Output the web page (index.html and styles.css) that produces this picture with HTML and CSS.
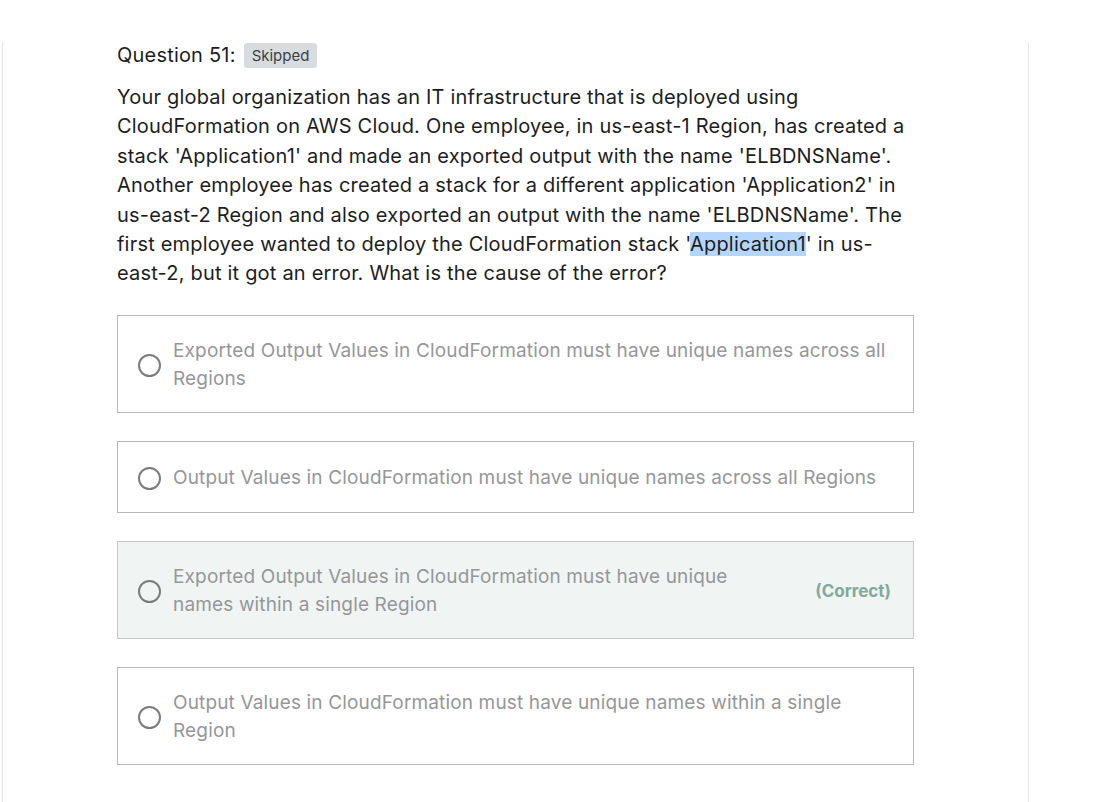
FILE: index.html
```html
<!DOCTYPE html>
<html>
<head>
<meta charset="utf-8">
<link rel="stylesheet" href="styles.css">
</head>
<body>
<div class="frame">
  <div class="content">
    <div class="title-row">
      <span class="title">Question 51:</span>
      <span class="badge">Skipped</span>
    </div>
    <p class="question">Your global organization has an IT infrastructure that is deployed using CloudFormation on AWS Cloud. One employee, in us-east-1 Region, has created a stack 'Application1' and made an exported output with the name 'ELBDNSName'. Another employee has created a stack for a different application 'Application2' in us-east-2 Region and also exported an output with the name 'ELBDNSName'. The first employee wanted to deploy the CloudFormation stack '<span class="sel">Application1</span>' in us-east-2, but it got an error. What is the cause of the error?</p>
    <div class="options">
      <div class="option">
        <span class="radio"></span>
        <span class="opt-text">Exported Output Values in CloudFormation must have unique names across all Regions</span>
      </div>
      <div class="option">
        <span class="radio"></span>
        <span class="opt-text">Output Values in CloudFormation must have unique names across all Regions</span>
      </div>
      <div class="option correct">
        <span class="radio"></span>
        <span class="opt-text narrow">Exported Output Values in CloudFormation must have unique names within a single Region</span>
        <span class="correct-label">(Correct)</span>
      </div>
      <div class="option">
        <span class="radio"></span>
        <span class="opt-text">Output Values in CloudFormation must have unique names within a single Region</span>
      </div>
    </div>
  </div>
</div>
</body>
</html>
```
FILE: styles.css
```css
html, body {
  margin: 0;
  padding: 0;
  background: #ffffff;
}
body {
  font-family: Inter, "Noto Sans", "Liberation Sans", sans-serif;
  color: #1c1d1f;
  padding-top: 42px;
}
.frame {
  margin-left: 2px;
  width: 1025px;
  min-height: 760px;
  border-left: 1px solid #e6e6e6;
  border-right: 1px solid #e6e6e6;
}
.content {
  margin-left: 114px;
  width: 797px;
}
.title-row {
  display: flex;
  align-items: center;
  gap: 8px;
  height: 26px;
}
.title {
  font-size: 20px;
  letter-spacing: 0.2px;
}
.badge {
  background: #d8dce0;
  color: #3b3f45;
  font-size: 15px;
  padding: 0 8px;
  height: 25px;
  line-height: 25px;
  border-radius: 3px;
}
.question {
  margin: 15px 0 0 0;
  width: 800px;
  font-size: 20px;
  line-height: 29.4px;
  letter-spacing: 0.2px;
}
.sel {
  background: #b4d6fd;
}
.options {
  display: flex;
  flex-direction: column;
  gap: 28px;
  margin-top: 26px;
}
.option {
  display: flex;
  align-items: center;
  border: 1px solid #b9b9b9;
  padding: 21px 20px 19px 20px;
  min-height: 30px;
}
.option.correct {
  background: #f0f4f3;
  border-color: #c5c9c7;
}
.radio {
  flex: none;
  width: 19px;
  height: 19px;
  border: 2px solid #7c7c7c;
  border-radius: 50%;
  margin: 2px 12px 0 0;
}
.opt-text {
  flex: 1;
  font-size: 19px;
  line-height: 28px;
  color: #95979a;
  letter-spacing: 0.15px;
}
.opt-text.narrow {
  flex: none;
  width: 575px;
}
.correct-label {
  margin-left: auto;
  margin-right: 2px;
  font-size: 17px;
  font-weight: 700;
  color: #80aa9c;
}
```
